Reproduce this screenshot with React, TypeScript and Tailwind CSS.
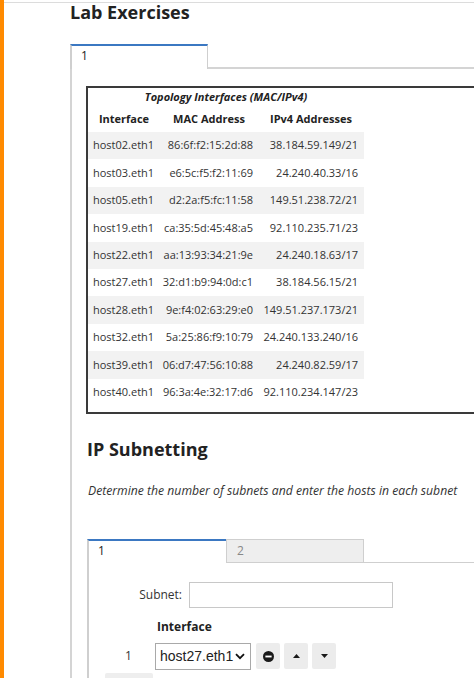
import React from "react";

const rows: [string, string, string][] = [
  ["host02.eth1", "86:6f:f2:15:2d:88", "38.184.59.149/21"],
  ["host03.eth1", "e6:5c:f5:f2:11:69", "24.240.40.33/16"],
  ["host05.eth1", "d2:2a:f5:fc:11:58", "149.51.238.72/21"],
  ["host19.eth1", "ca:35:5d:45:48:a5", "92.110.235.71/23"],
  ["host22.eth1", "aa:13:93:34:21:9e", "24.240.18.63/17"],
  ["host27.eth1", "32:d1:b9:94:0d:c1", "38.184.56.15/21"],
  ["host28.eth1", "9e:f4:02:63:29:e0", "149.51.237.173/21"],
  ["host32.eth1", "5a:25:86:f9:10:79", "24.240.133.240/16"],
  ["host39.eth1", "06:d7:47:56:10:88", "24.240.82.59/17"],
  ["host40.eth1", "96:3a:4e:32:17:d6", "92.110.234.147/23"],
];

export default function App() {
  return (
    <div className="flex w-[474px] h-[678px] overflow-hidden bg-white font-['Open_Sans',sans-serif] text-[#333]">
      <div className="w-[4px] shrink-0 bg-[#ff8a00]" />
      <div className="flex-1 min-w-0 mt-[2px] border-t border-[#dcdcdc] pl-[66px]">
        <h1 className="-mt-[3px] text-[18px] leading-[24px] font-bold text-[#222]">Lab Exercises</h1>

        {/* outer tabs */}
        <div className="mt-[20px] flex h-[25px]">
          <div className="w-[138px] shrink-0 border-t-2 border-t-[#3b78c2] border-l-2 border-r border-[#cfcfcf] bg-white pl-[9px] text-[12px] leading-[20px] text-[#222]">
            1
          </div>
          <div className="flex-1 border-b-2 border-[#d4d4d4]" />
        </div>

        {/* outer panel */}
        <div className="border-l-2 border-[#d4d4d4] pl-[14px] pt-[17px] w-[600px]">
          <div className="w-[460px] border-2 border-[#3a3a3a] pb-[6px]">
            <table className="table-fixed border-collapse w-[276px] text-[11px]">
              <caption className="h-[18px] leading-[18px] font-bold italic text-[#222] text-center">
                Topology Interfaces (MAC/IPv4)
              </caption>
              <colgroup>
                <col className="w-[72px]" />
                <col className="w-[98px]" />
                <col className="w-[106px]" />
              </colgroup>
              <thead>
                <tr className="h-[26px] font-bold text-[#222]">
                  <th className="text-center font-bold p-0">Interface</th>
                  <th className="text-center font-bold p-0">MAC Address</th>
                  <th className="text-center font-bold p-0">IPv4 Addresses</th>
                </tr>
              </thead>
              <tbody>
                {rows.map((r, i) => (
                  <tr key={r[0]} className={i % 2 === 0 ? "h-[27.4px] bg-[#f2f2f2]" : "h-[27.4px] bg-white"}>
                    <td className="pl-[5px] text-left whitespace-nowrap">{r[0]}</td>
                    <td className="pr-[5px] text-right whitespace-nowrap">{r[1]}</td>
                    <td className="pr-[6px] text-right whitespace-nowrap">{r[2]}</td>
                  </tr>
                ))}
              </tbody>
            </table>
          </div>

          <h2 className="mt-[23px] text-[18px] leading-[24px] font-bold text-[#222] pl-[1px]">IP Subnetting</h2>
          <p className="mt-[21px] text-[12.2px] leading-[18px] italic text-[#333] pl-[2px]">
            Determine the number of subnets and enter the hosts in each subnet
          </p>

          {/* inner tabs */}
          <div className="mt-[39px] flex h-[24px] w-[420px] ml-[1px]">
            <div className="w-[139px] shrink-0 border-t-2 border-t-[#3b78c2] border-l-2 border-[#cfcfcf] bg-white pl-[9px] text-[12px] leading-[20px] text-[#222]">
              1
            </div>
            <div className="w-[138px] shrink-0 border border-[#cfcfcf] bg-[#eeeeee] pl-[10px] text-[12px] leading-[21px] text-[#888]">
              2
            </div>
            <div className="flex-1 border-b border-[#cfcfcf]" />
          </div>

          {/* inner panel */}
          <div className="ml-[1px] border-l-2 border-[#cfcfcf] pt-[19px] h-[200px]">
            <div className="flex items-center">
              <div className="w-[93px] text-right text-[12px] text-[#333]">Subnet:</div>
              <div className="ml-[7px] w-[204px] h-[26px] border border-[#c8c8c8] bg-white" />
            </div>
            <div className="mt-[10px] pl-[68px] text-[12px] leading-[18px] font-bold text-[#222]">Interface</div>
            <div className="mt-[7px] flex items-center h-[27px]">
              <div className="w-[66px] pl-[36px] text-[12px] text-[#333]">1</div>
              <div className="flex items-center justify-between w-[96px] h-[27px] border border-[#a9a9a9] bg-white pl-[4px] pr-[5px] font-['Liberation_Sans',Arial,sans-serif] text-[14px] text-[#222]">
                <span>host27.eth1</span>
                <svg width="10" height="7" viewBox="0 0 10 7" className="shrink-0">
                  <path d="M1 1.2 L5 5.2 L9 1.2" fill="none" stroke="#111" strokeWidth="1.8" />
                </svg>
              </div>
              <div className="ml-[5px] w-[24px] h-[26px] rounded-[2px] bg-[#ececec] flex items-center justify-center">
                <svg width="11" height="11" viewBox="0 0 12 12">
                  <circle cx="6" cy="6" r="6" fill="#1a1a1a" />
                  <rect x="2.6" y="5" width="6.8" height="2" fill="#fff" />
                </svg>
              </div>
              <div className="ml-[4px] w-[24px] h-[26px] rounded-[2px] bg-[#ececec] flex items-center justify-center">
                <svg width="7" height="4" viewBox="0 0 7 4">
                  <path d="M0 4 L3.5 0 L7 4 Z" fill="#1a1a1a" />
                </svg>
              </div>
              <div className="ml-[4px] w-[24px] h-[26px] rounded-[2px] bg-[#ececec] flex items-center justify-center">
                <svg width="7" height="4" viewBox="0 0 7 4">
                  <path d="M0 0 L7 0 L3.5 4 Z" fill="#1a1a1a" />
                </svg>
              </div>
            </div>
            <div className="mt-[3px] ml-[16px] w-[48px] h-[20px] bg-[#eeeeee] rounded-[2px]" />
          </div>
        </div>
      </div>
    </div>
  );
}
